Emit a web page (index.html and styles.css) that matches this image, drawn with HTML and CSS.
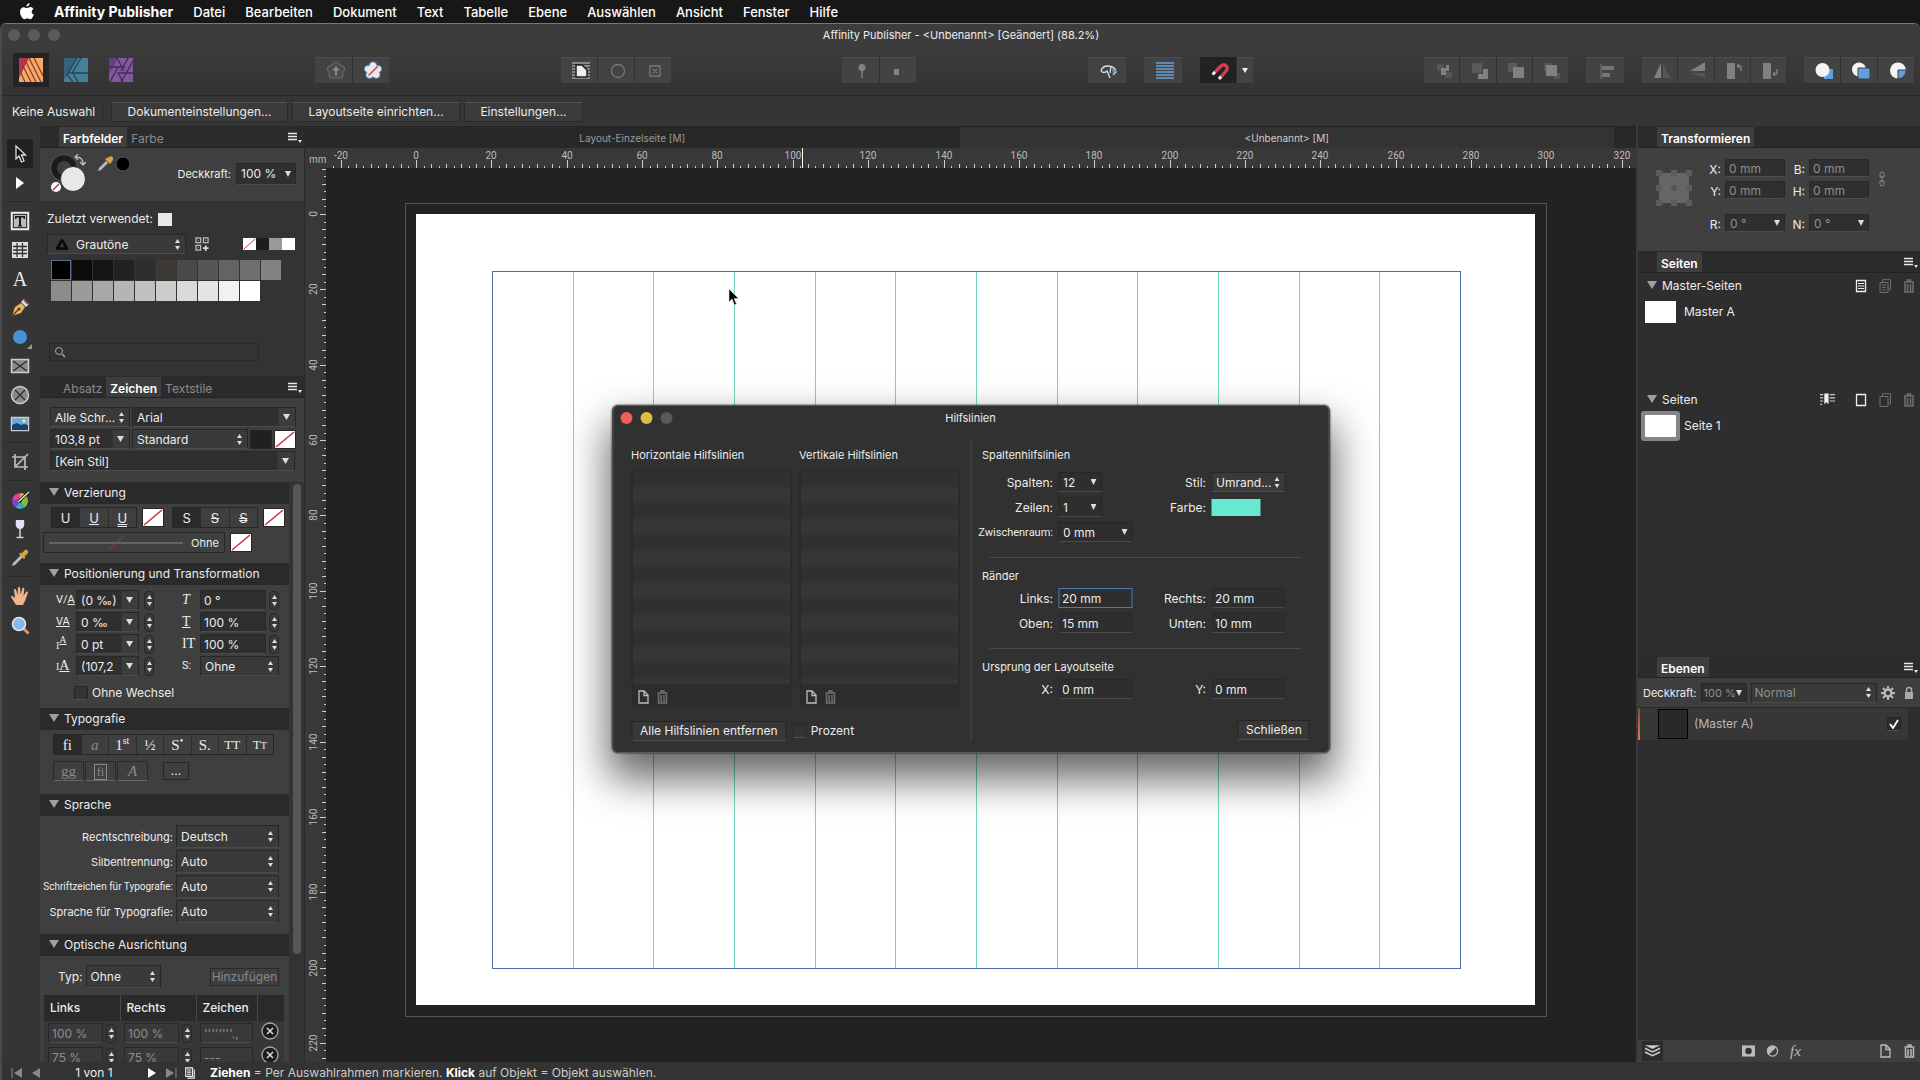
FILE: index.html
```html
<!DOCTYPE html>
<html lang="de">
<head>
  <meta charset="UTF-8">
  <meta name="viewport" content="width=device-width, initial-scale=1.0">
  <title>Affinity Publisher</title>
  <link rel="stylesheet" href="styles.css">
</head>
<body>

<!-- shared icons -->
<svg class="sprite" aria-hidden="true">
  <symbol id="i-menu" viewBox="0 0 14 12"><path d="M0 1.500h9M0 4.500h9M0 7.500h9" stroke="#e8e8e8" stroke-width="1.400"/><path d="M10 8h4l-2 3z" fill="#e8e8e8"/></symbol>
  <symbol id="i-trash" viewBox="0 0 12 14"><path d="M1 3h10M4.500 2.500v-1.500h3v1.500M2 4v9h8v-9M4.500 5v7M7.500 5v7" fill="none" stroke="currentColor" stroke-width="1.500"/></symbol>
  <symbol id="i-page" viewBox="0 0 12 14"><path d="M1.500 1h5l4 4v8h-9zM6.500 1v4.500h4" fill="none" stroke="currentColor" stroke-width="1.300"/></symbol>
  <symbol id="i-none" viewBox="0 0 20 18" preserveAspectRatio="none"><path d="M0 0h20v18H0z" fill="#fff"/><path d="M1 17L19 1" stroke="#c8323c" stroke-width="1.500"/></symbol>
  <symbol id="i-flower" viewBox="0 0 22 22"><path d="M11 1c2.500 0 4 1.800 4.200 4.200 2.600-.6 5 .6 5.200 3 .2 1.900-1 3.300-2.600 4.300 1.200 1.700 1.300 4-.2 5.500-1.800 1.700-4.500 1.200-6.600-.8-2.100 2-4.800 2.500-6.600.8-1.500-1.500-1.400-3.800-.2-5.500C2.600 11.500 1.400 10.100 1.600 8.200c.2-2.400 2.600-3.600 5.200-3C7 2.800 8.500 1 11 1z"/></symbol>
</svg>

<nav class="menubar">
  <svg class="apple" viewBox="0 0 14 17"><path d="M9.700 0c.1 1.800-1.500 3.600-3.200 3.600C6.300 1.900 8 .2 9.700 0zM13.300 5.900c-2.400 1.500-2 4.700.6 5.700-.6 2-2.100 4.600-3.600 4.600-1.100 0-1.500-.7-2.900-.7s-1.900.7-2.900.7C2.500 16.200 0 12 0 8.700 0 5.800 1.900 4.200 3.800 4.200c1.300 0 2.200.8 3.200.8s2-.9 3.700-.9c1.100.1 2 .7 2.600 1.800z" fill="#fff"/></svg>
  <a href="#" class="app">Affinity Publisher</a>
  <a href="#">Datei</a>
  <a href="#">Bearbeiten</a>
  <a href="#">Dokument</a>
  <a href="#">Text</a>
  <a href="#">Tabelle</a>
  <a href="#">Ebene</a>
  <a href="#">Auswählen</a>
  <a href="#">Ansicht</a>
  <a href="#">Fenster</a>
  <a href="#">Hilfe</a>
</nav>

<div class="window">
  <header class="titlebar">
    <span class="lights"><i></i><i></i><i></i></span>
    <h1>Affinity Publisher - &lt;Unbenannt&gt; [Geändert] (88.2%)</h1>
  </header>

  <div class="toolbar">
    <div class="personas">
      <button class="on" aria-label="Publisher Persona"><svg viewBox="0 0 24 24"><path d="M0 0h24v24H0z" fill="#f5a868"/><path d="M0 0h10L0 20z" fill="#b5354c"/><path d="M4 8l8 16M7 4l10 20M10 0l12 24M15 0l9 18M1 13l5 11" stroke="#8c3f30" stroke-width="1.300" fill="none"/></svg></button>
      <button aria-label="Designer Persona"><svg viewBox="0 0 24 24"><path d="M0 0h24v24H0z" fill="#477f99"/><path d="M0 0h13L0 22z" fill="#38607f"/><path d="M13 0L3 17l6 7M17 0L8 15h16M9 15l5 9M4 15h5" stroke="#20465c" stroke-width="1.300" fill="none"/></svg></button>
      <button aria-label="Photo Persona"><svg viewBox="0 0 24 24"><path d="M0 0h24v24H0z" fill="#82589a"/><path d="M0 0h9L0 16z" fill="#60437f"/><path d="M8 0l7 13M24 3L12 24M0 9h16M9 9L1 24M24 15H9l5 9M19 0l-7 13" stroke="#452a5a" stroke-width="1.300" fill="none"/></svg></button>
    </div>
    <span class="space"></span>
    <div class="group">
      <button aria-label="Standards übernehmen"><svg viewBox="0 0 22 22"><use href="#i-flower" fill="#4b4b4b" stroke="#777"/><path d="M11 16V8M8 10.500L11 7l3 3.500" stroke="#8a8a8a" stroke-width="2" fill="none"/></svg></button>
      <button aria-label="Standards zurücksetzen"><svg viewBox="0 0 22 22"><use href="#i-flower" fill="#e6e9ee" stroke="#5a96d8"/><path d="M6 16L16 6" stroke="#d8494c" stroke-width="1.800"/></svg></button>
    </div>
    <span class="space"></span>
    <div class="group g3">
      <button aria-label="Umfließen"><svg viewBox="0 0 20 20"><path d="M1 2h18M1 5h18M1 8h18M1 11h18M1 14h18M1 17h18" stroke="#ccc"/><path d="M5 4h6l5 5v7H5z" fill="#eee" stroke="#222" stroke-width="1.500"/></svg></button>
      <button aria-label="Ellipse"><svg viewBox="0 0 20 20"><circle cx="10" cy="10" r="6.500" fill="none" stroke="#7a7a7a" stroke-width="1.300"/></svg></button>
      <button aria-label="Rahmen"><svg viewBox="0 0 20 20"><path d="M5 5h10v10H5zM8 8l4 4M12 8l-4 4" fill="none" stroke="#7a7a7a" stroke-width="1.300"/></svg></button>
    </div>
    <span class="space"></span>
    <div class="group">
      <button aria-label="Anheften"><svg viewBox="0 0 20 20"><circle cx="10" cy="6.500" r="3.500" fill="#828282"/><path d="M10 9v8" stroke="#828282" stroke-width="1.500"/></svg></button>
      <button aria-label="Inline"><svg viewBox="0 0 20 20"><path d="M4 8h5v6H4z" fill="#828282"/></svg></button>
    </div>
    <span class="space"></span>
    <div class="group single"><button aria-label="Vorschau"><svg viewBox="0 0 20 20"><path d="M2 10c1-4 4-5 7-5 5 0 8 3 8 6l-3 3M2 10c2 2 4 2 6 0l3 7M12 5l-1 7" fill="none" stroke="#ddd" stroke-width="1.300"/><path d="M13 6l4 4-3 4z" fill="#5f93c4"/></svg></button></div>
    <div class="group single"><button aria-label="Grundlinienraster"><svg viewBox="0 0 20 20"><path d="M1 2h18M1 5h18M1 8h18M1 11h18M1 14h18M1 17h18" stroke="#6aa0d8" stroke-width="1.400"/></svg></button></div>
    <div class="group magnet">
      <button class="on" aria-label="Einrasten"><svg viewBox="0 0 20 20"><path d="M4 12l7-7c4-3 8 1 5 5l-6 7" fill="none" stroke="#cf3f56" stroke-width="3.400"/><path d="M2.500 13.500L5 11M9 18l2-2.500" stroke="#eee" stroke-width="3"/></svg></button>
      <button class="caret" aria-label="Einrastoptionen"><svg viewBox="0 0 10 10"><path d="M2 2h6l-3 5z" fill="#eee"/></svg></button>
    </div>
    <span class="space"></span>
    <div class="group g4">
      <button aria-label="Ganz nach hinten"><svg viewBox="0 0 20 20"><path d="M3 3h7v7H3zM11 11h7v6h-7z" fill="#555"/><path d="M7 7h5V4h3v6h-3v4H7z" fill="#808080"/></svg></button>
      <button aria-label="Nach hinten"><svg viewBox="0 0 20 20"><path d="M2 2h10v10H2z" fill="#5a5a5a"/><path d="M13 8h5v10H8v-5h5z" fill="#808080"/></svg></button>
      <button aria-label="Nach vorne"><svg viewBox="0 0 20 20"><path d="M2 2h9v9H2z" fill="#5a5a5a"/><path d="M7 6h11v11H7z" fill="#808080"/></svg></button>
      <button aria-label="Ganz nach vorne"><svg viewBox="0 0 20 20"><path d="M2 2h8v8H2zM12 12h6v6h-6z" fill="#565656"/><path d="M4 4h11v11H4z" fill="#808080"/></svg></button>
    </div>
    <div class="group single"><button aria-label="Ausrichtung"><svg viewBox="0 0 20 20"><path d="M4 3v15" stroke="#777"/><path d="M5 5h12v4H5zM5 12h8v4H5z" fill="#777"/></svg></button></div>
    <div class="group g4">
      <button aria-label="Horizontal spiegeln"><svg viewBox="0 0 20 20"><path d="M9 2v15H2z" fill="#808080"/><path d="M11 2v15h7z" fill="#555"/></svg></button>
      <button aria-label="Vertikal spiegeln"><svg viewBox="0 0 20 20"><path d="M17 1v9H2z" fill="#808080"/><path d="M2 12h15v5z" fill="#555"/></svg></button>
      <button aria-label="Links drehen"><svg viewBox="0 0 20 20"><path d="M3 2h8v16H3z" fill="#808080"/><path d="M17 10V5h-4M15 3l-2 2 2 2" stroke="#999" fill="none"/></svg></button>
      <button aria-label="Rechts drehen"><svg viewBox="0 0 20 20"><path d="M3 2h8v16H3z" fill="#808080"/><path d="M17 8v5h-4M15 11l-2 2 2 2" stroke="#999" fill="none"/></svg></button>
    </div>
    <div class="group g3">
      <button aria-label="Dahinter einfügen"><svg viewBox="0 0 20 20"><path d="M10 8h9v10h-9z" fill="#5f9fdf"/><circle cx="8.500" cy="9" r="7" fill="#f4f4f4"/></svg></button>
      <button aria-label="Oben einfügen"><svg viewBox="0 0 20 20"><circle cx="8" cy="8.500" r="7" fill="#f4f4f4"/><path d="M7 7h12v11H7z" fill="#5f9fdf" stroke="#3c3c3c"/></svg></button>
      <button aria-label="Innen einfügen"><svg viewBox="0 0 20 20"><circle cx="10" cy="9.500" r="8" fill="#f4f4f4"/><path d="M10 9h8c0 5-3 8.500-8 8.500z" fill="#5f9fdf" stroke="#3c3c3c"/></svg></button>
    </div>
  </div>

  <div class="context">
    <span class="selection">Keine Auswahl</span>
    <button class="w1">Dokumenteinstellungen...</button>
    <button class="w2">Layoutseite einrichten...</button>
    <button class="w3">Einstellungen...</button>
  </div>

  <main>
    <div class="tools">
      <button class="on" aria-label="Verschieben"><svg viewBox="0 0 24 24"><path d="M8 4v13l3-3 2.500 6 2.500-1-2.500-6h4z" fill="#111" stroke="#ddd" stroke-width="1.300"/></svg></button>
      <button aria-label="Knoten"><svg viewBox="0 0 24 24"><path d="M8 6l8 6-8 6z" fill="#fff"/></svg></button>
      <hr>
      <button aria-label="Rahmentext"><svg viewBox="0 0 24 24"><path d="M3.500 3.500h17v17h-17z" fill="#bbb" stroke="#e8e8e8" stroke-width="1.500"/><path d="M5.500 5.500h13v13h-13z" fill="none" stroke="#333"/><path d="M7 7h10v3h-1l-1-1.500h-2V16l1 .5v1h-4v-1l1-.5V8.500H9L8 10H7z" fill="#1c1c1c"/></svg></button>
      <button aria-label="Tabelle"><svg viewBox="0 0 24 24"><path d="M4 4h16v16H4z" fill="#ddd"/><path d="M5 8.500h14M5 12h14M5 15.500h14M9 5v14M14.500 5v14" stroke="#333" stroke-width="1.300"/></svg></button>
      <button aria-label="Grafiktext"><span class="letter">A</span></button>
      <button aria-label="Zeichenstift"><svg viewBox="0 0 24 24"><path d="M4 20l3-9 6-4 4 4-4 6z" fill="#e8b65c"/><path d="M4 20l6-6" stroke="#5b3a12" stroke-width="1.400"/><circle cx="11" cy="13" r="1.500" fill="#5b3a12"/><path d="M13 6l5 5 3-3-5-5z" fill="#ddd"/><path d="M16 4l4 4" stroke="#8c3030" stroke-width="1.500"/></svg></button>
      <button aria-label="Ellipse"><svg viewBox="0 0 24 24"><circle cx="12" cy="12" r="7" fill="#4690d4"/><path d="M24 19v5h-5z" fill="#999"/></svg></button>
      <button aria-label="Bildrahmen Rechteck"><svg viewBox="0 0 24 24"><path d="M3.500 5.500h17v13h-17z" fill="#8a8a8a" stroke="#ccc" stroke-width="1.500"/><path d="M5 7l14 10M19 7L5 17" stroke="#2a2a2a" stroke-width="1.200"/></svg></button>
      <button aria-label="Bildrahmen Ellipse"><svg viewBox="0 0 24 24"><circle cx="12" cy="12" r="8.500" fill="#8a8a8a" stroke="#ccc" stroke-width="1.500"/><path d="M7 7l10 10M17 7L7 17" stroke="#2a2a2a" stroke-width="1.200"/></svg></button>
      <button aria-label="Bild platzieren"><svg viewBox="0 0 24 24"><path d="M3.500 5.500h17v13h-17z" fill="#67a8dc" stroke="#ccc" stroke-width="1.500"/><path d="M4 13l5-2 4 2 3-1 4 1v5H4z" fill="#1c3f6b"/><circle cx="16" cy="9" r="1.800" fill="#f6dc6a"/></svg></button>
      <hr>
      <button aria-label="Zuschneiden"><svg viewBox="0 0 24 24"><path d="M7 4v13h13M4 7h13v13M8 16l12-12" fill="none" stroke="#bbb" stroke-width="1.700"/></svg></button>
      <hr>
      <button aria-label="Füllung"><svg viewBox="0 0 24 24"><g fill="none" stroke-width="6"><path d="M12 8a5 5 0 0 1 4.500 3" stroke="#e0b23a"/><path d="M16.700 11a5 5 0 0 1-2 6" stroke="#79c143"/><path d="M14.700 17a5 5 0 0 1-5.500 0" stroke="#38a4d8"/><path d="M9.200 17a5 5 0 0 1-2-5" stroke="#7a46c8"/><path d="M7.200 12a5 5 0 0 1 5-4" stroke="#e0458a"/></g><path d="M10 14L21 4" stroke="#111" stroke-width="3"/><path d="M10 14L21 4" stroke="#eee" stroke-width="1.400"/></svg></button>
      <button aria-label="Transparenz"><svg viewBox="0 0 24 24"><path d="M8 3h8c1 6-.5 9-4 9s-5-3-4-9z" fill="#dfe5f2"/><path d="M12 12v8M8.500 20.500h7" stroke="#c8cede" stroke-width="1.600"/></svg></button>
      <button aria-label="Farbpipette"><svg viewBox="0 0 24 24"><path d="M4 20l1-3 8-8 2 2-8 8z" fill="#bbb"/><path d="M11 8l5 5 1.500-1.500-1-1L20 7c1-2-1-4-3-3l-3.500 3.500-1-1z" fill="#d9a441"/></svg></button>
      <hr>
      <button aria-label="Ansicht"><svg viewBox="0 0 24 24"><path d="M8 21l-5-8c0-1 1.500-1.500 2.500 0L7 14 6 6c0-1.500 2-1.500 2.200 0L9.500 11 10 4c.1-1.400 2-1.400 2.200 0l.3 7 1.800-6.500c.4-1.300 2.200-1 2 .4L15.500 12l2.500-4c.8-1 2.300-.2 1.800 1L17 17l-2 4z" fill="#efb48c"/></svg></button>
      <button aria-label="Zoom"><svg viewBox="0 0 24 24"><path d="M15 15l5.500 5.500" stroke="#d99a63" stroke-width="3"/><circle cx="11" cy="11" r="6.500" fill="#86b9e8" stroke="#dfe8f0" stroke-width="1.500"/></svg></button>
    </div>

    <aside class="panels left">
      <div class="tabs">
        <button class="tab on">Farbfelder</button><button class="tab">Farbe</button>
        <button class="flyout" aria-label="Optionen"><svg><use href="#i-menu"/></svg></button>
      </div>
      <div class="color-head">
        <svg class="wells" viewBox="0 0 86 40"><circle cx="15" cy="14" r="10" fill="none" stroke="#1c1c1c" stroke-width="6"/><circle cx="15" cy="14" r="13.500" fill="none" stroke="#555"/><path d="M27 3c5 0 7 3 7 7M29 0l-3 3 3 3M31 8l3 3 3-3" fill="none" stroke="#bbb" stroke-width="1.300"/><circle cx="24" cy="25" r="12.500" fill="#e6e8ea" stroke="#333"/><circle cx="7" cy="33" r="5" fill="#fff"/><path d="M4 36l6-6" stroke="#c8323c" stroke-width="1.500"/><path d="M49 17l1-3 7-7 2 2-7 7z" fill="#bbb"/><path d="M56 5l5 5 3-4c1-2-2-5-4-3z" fill="#d9a441"/><circle cx="74" cy="10" r="7" fill="#000" stroke="#555"/></svg>
        <label for="deck">Deckkraft:</label>
        <select id="deck" class="combo"><option>100 %</option></select>
      </div>
      <div class="swatch-panel">
        <div class="recent">Zuletzt verwendet: <button class="chip" aria-label="Weiß"></button></div>
        <div class="palette-row">
          <svg class="palette-mark" viewBox="0 0 14 12"><path d="M7 2l5 8.500H2z" fill="none" stroke="#0a0a0a" stroke-width="2.500" stroke-linejoin="round"/></svg>
          <select class="updown" aria-label="Palette"><option>Grautöne</option></select>
          <button class="bare" aria-label="Farbe hinzufügen"><svg viewBox="0 0 15 15"><path d="M1 1h5v5H1zM9 1h5v5H9zM1 9h5v5H1zM3 3.500h1M11 3.500h1M3 11.500h1" fill="none" stroke="#bbb" stroke-width="1.300"/><path d="M11.500 9v6M8.500 12h6" stroke="#ddd" stroke-width="1.800"/></svg></button>
          <span class="mini"><svg><use href="#i-none"/></svg><i class="k"></i><i class="g"></i><i class="w"></i></span>
        </div>
        <div class="swatches" id="swatches"></div>
        <div class="search"><svg viewBox="0 0 12 12"><circle cx="5" cy="5" r="3.500" fill="none" stroke="#aaa"/><path d="M8 8l3 3" stroke="#aaa" stroke-width="1.500"/></svg><input type="text" aria-label="Suchen"></div>
      </div>

      <div class="tabs">
        <button class="tab">Absatz</button><button class="tab on">Zeichen</button><button class="tab">Textstile</button>
        <button class="flyout" aria-label="Optionen"><svg><use href="#i-menu"/></svg></button>
      </div>
      <div class="font-box">
        <div class="line">
          <select class="updown f1" aria-label="Schriftsammlung"><option>Alle Schr...</option></select>
          <select class="drop f2" aria-label="Schrift"><option>Arial</option></select>
        </div>
        <div class="line">
          <select class="drop f1" aria-label="Schriftgrad"><option>103,8 pt</option></select>
          <select class="updown f3" aria-label="Schnitt"><option>Standard</option></select>
          <button class="sw dark" aria-label="Textfarbe"></button>
          <button class="sw" aria-label="Hintergrund"><svg><use href="#i-none"/></svg></button>
        </div>
        <div class="line"><select class="drop f4" aria-label="Zeichenstil"><option>[Kein Stil]</option></select></div>
      </div>

      <div class="scroller">
        <div class="sections">
          <h3>Verzierung</h3>
          <div class="body deco">
            <div class="line">
              <div class="seg"><button class="on">U</button><button><u>U</u></button><button><u class="dbl">U</u></button></div>
              <button class="sw" aria-label="Unterstreichungsfarbe"><svg><use href="#i-none"/></svg></button>
              <div class="seg second"><button class="on">S</button><button><s>S</s></button><button><s class="dbl">S</s></button></div>
              <button class="sw" aria-label="Durchstreichungsfarbe"><svg><use href="#i-none"/></svg></button>
            </div>
            <div class="line">
              <button class="stroke"><svg viewBox="0 0 136 16"><path d="M0 8h136" stroke="#8a8a8a"/><path d="M61 15L76 1" stroke="#a33"/></svg>Ohne</button>
              <button class="sw" aria-label="Konturfarbe"><svg><use href="#i-none"/></svg></button>
            </div>
          </div>

          <h3>Positionierung und Transformation</h3>
          <div class="body pos">
            <div class="pairs">
              <div class="pair a">
                <label for="kern" class="sans">V/<u>A</u></label><select id="kern" class="drop"><option>(0 ‰)</option></select><button class="step" aria-label="Kerning ändern"></button>
                <label for="track" class="sans"><u>VA</u></label><select id="track" class="drop"><option>0 ‰</option></select><button class="step" aria-label="Laufweite ändern"></button>
                <label for="base"><small>I</small><sup><u>A</u></sup></label><select id="base" class="drop"><option>0 pt</option></select><button class="step" aria-label="Grundlinie ändern"></button>
                <label for="lead"><small>I</small><u>A</u></label><select id="lead" class="drop"><option>(107,2</option></select><button class="step" aria-label="Zeilenabstand ändern"></button>
              </div>
              <div class="pair b">
                <label for="shear"><i>T</i></label><input id="shear" type="text" value="0 °"><button class="step" aria-label="Neigung ändern"></button>
                <label for="hs"><u>T</u></label><input id="hs" type="text" value="100 %"><button class="step" aria-label="Breite ändern"></button>
                <label for="vs">IT</label><input id="vs" type="text" value="100 %"><button class="step" aria-label="Höhe ändern"></button>
                <label for="pv" class="sans">S:</label><select id="pv" class="updown wide"><option>Ohne</option></select>
              </div>
            </div>
            <label class="check"><input type="checkbox">Ohne Wechsel</label>
          </div>

          <h3>Typografie</h3>
          <div class="body typo">
            <div class="seg eight"><button class="on">fi</button><button class="dim"><i>a</i></button><button>1<sup>st</sup></button><button>½</button><button>S<sup>•</sup></button><button>S.</button><button class="caps">TT</button><button class="caps">T<small>T</small></button></div>
            <div class="line">
              <button class="box">gg</button><button class="box"><span>fi</span></button><button class="box"><i>A</i></button><button class="more">...</button>
            </div>
          </div>

          <h3>Sprache</h3>
          <div class="body lang">
            <label for="l1">Rechtschreibung:</label><select id="l1" class="updown"><option>Deutsch</option></select>
            <label for="l2">Silbentrennung:</label><select id="l2" class="updown"><option>Auto</option></select>
            <label for="l3" class="tight">Schriftzeichen für Typografie:</label><select id="l3" class="updown"><option>Auto</option></select>
            <label for="l4">Sprache für Typografie:</label><select id="l4" class="updown"><option>Auto</option></select>
          </div>

          <h3>Optische Ausrichtung</h3>
          <div class="body optical">
            <div class="line">
              <label for="typ">Typ:</label><select id="typ" class="updown"><option>Ohne</option></select>
              <button class="add" disabled>Hinzufügen</button>
            </div>
            <table>
              <thead><tr><th>Links</th><th>Rechts</th><th>Zeichen</th><th></th></tr></thead>
              <tbody>
                <tr>
                  <td><span><input type="text" value="100 %" aria-label="Links" disabled><button class="step" aria-label="Links ändern"></button></span></td>
                  <td><span><input type="text" value="100 %" aria-label="Rechts" disabled><button class="step" aria-label="Rechts ändern"></button></span></td>
                  <td><input type="text" value="''''''''.," aria-label="Zeichen" disabled></td>
                  <td><button class="del" aria-label="Löschen"><svg viewBox="0 0 18 18"><circle cx="9" cy="9" r="8" fill="#1c1c1c" stroke="#aaa" stroke-width="1.300"/><path d="M6 6l6 6M12 6l-6 6" stroke="#ddd" stroke-width="1.500"/></svg></button></td>
                </tr>
                <tr>
                  <td><span><input type="text" value="75 %" aria-label="Links" disabled><button class="step" aria-label="Links ändern"></button></span></td>
                  <td><span><input type="text" value="75 %" aria-label="Rechts" disabled><button class="step" aria-label="Rechts ändern"></button></span></td>
                  <td><input type="text" value="---" aria-label="Zeichen" disabled></td>
                  <td><button class="del" aria-label="Löschen"><svg viewBox="0 0 18 18"><circle cx="9" cy="9" r="8" fill="#1c1c1c" stroke="#aaa" stroke-width="1.300"/><path d="M6 6l6 6M12 6l-6 6" stroke="#ddd" stroke-width="1.500"/></svg></button></td>
                </tr>
              </tbody>
            </table>
          </div>
        </div>
        <div class="bar"></div>
      </div>
    </aside>

    <section class="document">
      <div class="doc-tabs">
        <button>Layout-Einzelseite [M]</button>
        <button class="on">&lt;Unbenannt&gt; [M]</button>
      </div>
      <span class="unit">mm</span>
      <svg class="ruler-h" id="rulerH"></svg>
      <svg class="ruler-v" id="rulerV"></svg>
      <div class="canvas">
        <svg class="sheet" id="sheet"></svg>
        <svg class="cursor" viewBox="0 0 12 18"><path d="M1 1v13l3-3 2.500 6 2-1-2.500-5.500h4.500z" fill="#000" stroke="#ddd" stroke-width=".6"/></svg>
      </div>

      <div class="dialog" role="dialog" aria-labelledby="dlgTitle">
        <header>
          <span class="lights"><i class="red"></i><i class="yellow"></i><i></i></span>
          <h2 id="dlgTitle">Hilfslinien</h2>
        </header>
        <div class="dlg-body">
          <div class="guides">
            <div class="lists">
              <div>
                <h4>Horizontale Hilfslinien</h4>
                <div class="list"></div>
                <div class="list-bar"><button aria-label="Neu"><svg><use href="#i-page"/></svg></button><button class="dim" aria-label="Löschen"><svg><use href="#i-trash"/></svg></button></div>
              </div>
              <div>
                <h4>Vertikale Hilfslinien</h4>
                <div class="list"></div>
                <div class="list-bar"><button aria-label="Neu"><svg><use href="#i-page"/></svg></button><button class="dim" aria-label="Löschen"><svg><use href="#i-trash"/></svg></button></div>
              </div>
            </div>
            <div class="guide-actions">
              <button class="btn">Alle Hilfslinien entfernen</button>
              <label class="check"><input type="checkbox">Prozent</label>
            </div>
          </div>
          <form>
            <h4>Spaltenhilfslinien</h4>
            <div class="grid">
              <label for="cols">Spalten:</label><select id="cols" class="combo short"><option>12</option></select>
              <label for="style">Stil:</label><select id="style" class="updown"><option>Umrand...</option></select>
              <label for="rows">Zeilen:</label><select id="rows" class="combo short"><option>1</option></select>
              <label for="col">Farbe:</label><button type="button" id="col" class="farbe"></button>
              <label for="gut" class="tight">Zwischenraum:</label><select id="gut" class="combo"><option>0 mm</option></select>
            </div>
            <hr>
            <h4>Ränder</h4>
            <div class="grid">
              <label for="ml">Links:</label><input id="ml" type="text" value="20 mm" class="focus">
              <label for="mr">Rechts:</label><input id="mr" type="text" value="20 mm">
              <label for="mt">Oben:</label><input id="mt" type="text" value="15 mm">
              <label for="mb">Unten:</label><input id="mb" type="text" value="10 mm">
            </div>
            <hr>
            <h4>Ursprung der Layoutseite</h4>
            <div class="grid">
              <label for="ox">X:</label><input id="ox" type="text" value="0 mm">
              <label for="oy">Y:</label><input id="oy" type="text" value="0 mm">
            </div>
            <button type="button" class="btn close">Schließen</button>
          </form>
        </div>
      </div>
    </section>

    <aside class="panels right">
      <div class="tabs"><button class="tab on">Transformieren</button></div>
      <div class="transform">
        <svg class="anchor" viewBox="0 0 38 38"><path d="M4 4h30v30H4z" fill="#666"/><path d="M1 1h6v6H1zM16 1h6v6h-6zM31 1h6v6h-6zM1 16h6v6H1zM31 16h6v6h-6zM1 31h6v6H1zM16 31h6v6h-6zM31 31h6v6h-6z" fill="#5c5c5c"/><circle cx="19" cy="19" r="3" fill="#555"/></svg>
        <div class="xy">
          <label for="tx">X:</label><input id="tx" type="text" value="0 mm" disabled>
          <label for="tb">B:</label><input id="tb" type="text" value="0 mm" disabled>
          <label for="ty">Y:</label><input id="ty" type="text" value="0 mm" disabled>
          <label for="th">H:</label><input id="th" type="text" value="0 mm" disabled>
          <label for="tr" class="gap">R:</label><select id="tr" class="combo gap" disabled><option>0 °</option></select>
          <label for="tn" class="gap">N:</label><select id="tn" class="combo gap" disabled><option>0 °</option></select>
        </div>
        <svg class="link" viewBox="0 0 6 16"><path d="M1 6V3a2 2 0 0 1 4 0v3zM1 10v3a2 2 0 0 0 4 0v-3zM3 5v6" fill="none" stroke="#888"/></svg>
      </div>

      <div class="tabs"><button class="tab on">Seiten</button><button class="flyout" aria-label="Optionen"><svg><use href="#i-menu"/></svg></button></div>
      <div class="pages">
        <div class="pages-block masters">
          <div class="pages-head">
            <h3>Master-Seiten</h3>
            <button aria-label="Neuer Master"><svg viewBox="0 0 12 14"><path d="M1.500 1.500h9v11h-9z" fill="none" stroke="#eee" stroke-width="1.300"/><path d="M3 4.500h6M3 7h6M3 9.500h6" stroke="#eee"/></svg></button>
            <button class="dim" aria-label="Duplizieren"><svg viewBox="0 0 12 14"><path d="M1 3.500h8v10H1zM3.500 3V.7h8v10H9.500M3 6h4M3 8.500h4M3 11h4" fill="none" stroke="currentColor"/></svg></button>
            <button class="dim" aria-label="Löschen"><svg><use href="#i-trash"/></svg></button>
          </div>
          <a class="page-item" href="#"><i></i>Master A</a>
        </div>
        <div class="pages-block">
          <div class="pages-head">
            <h3>Seiten</h3>
            <button class="wide" aria-label="Abschnitte"><svg viewBox="0 0 14 12"><path d="M0 1h3M0 4h3M0 7h3M0 10h2M9 1h5M9 4h5M9 7h5" stroke="#ccc"/><path d="M4 0h4v10l-2-2-2 2z" fill="#eee"/></svg></button>
            <button aria-label="Neue Seite"><svg viewBox="0 0 12 14"><path d="M1.500 1.500h9v11h-9z" fill="none" stroke="#eee" stroke-width="1.300"/></svg></button>
            <button class="dim" aria-label="Duplizieren"><svg viewBox="0 0 12 14"><path d="M1 3.500h8v10H1zM3.500 3V.7h8v10H9.500" fill="none" stroke="currentColor"/></svg></button>
            <button class="dim" aria-label="Löschen"><svg><use href="#i-trash"/></svg></button>
          </div>
          <a class="page-item on" href="#"><i></i>Seite 1</a>
        </div>
      </div>

      <div class="tabs"><button class="tab on">Ebenen</button><button class="flyout" aria-label="Optionen"><svg><use href="#i-menu"/></svg></button></div>
      <div class="layer-opts">
        <label for="lo">Deckkraft:</label>
        <select id="lo" class="combo" disabled><option>100 %</option></select>
        <select class="updown" aria-label="Mischmodus" disabled><option>Normal</option></select>
        <button class="bare" aria-label="Optionen"><svg viewBox="0 0 14 14"><circle cx="7" cy="7" r="3.500" fill="none" stroke="#bbb" stroke-width="2.500"/><path d="M7 0v3M7 11v3M0 7h3M11 7h3M2 2l2 2M10 10l2 2M12 2l-2 2M4 10l-2 2" stroke="#bbb" stroke-width="2"/></svg></button>
        <button class="bare" aria-label="Sperren"><svg viewBox="0 0 14 14"><path d="M3 6h8v7H3z" fill="#aaa"/><path d="M4.500 6V4a2.500 2.500 0 0 1 5 0v2" fill="none" stroke="#aaa" stroke-width="1.500"/></svg></button>
      </div>
      <div class="layers">
        <div class="layer"><i></i><label for="vis">(Master A)</label><input id="vis" type="checkbox" checked></div>
      </div>
      <div class="layer-bar">
        <button class="stack" aria-label="Alle Ebenen"><svg viewBox="0 0 18 14"><path d="M1 1h16l-8 4z" fill="#ccc"/><path d="M1 4l8 4 8-4M1 8l8 4 8-4" fill="none" stroke="#ccc" stroke-width="1.700"/></svg></button>
        <button aria-label="Maske"><svg viewBox="0 0 14 14"><path d="M0 1h14v12H0z" fill="#bbb"/><circle cx="7" cy="7" r="3.500" fill="#333"/></svg></button>
        <button aria-label="Anpassung"><svg viewBox="0 0 14 14"><circle cx="7" cy="7" r="5.500" fill="none" stroke="#bbb" stroke-width="1.300"/><path d="M11 3A5.600 5.600 0 1 0 3 11z" fill="#bbb"/></svg></button>
        <button class="fx" aria-label="Effekte">fx</button>
        <span class="space"></span>
        <button aria-label="Neue Ebene"><svg><use href="#i-page"/></svg></button>
        <button aria-label="Löschen"><svg><use href="#i-trash"/></svg></button>
      </div>
    </aside>
  </main>

  <footer class="status">
    <button aria-label="Erste Seite"><svg viewBox="0 0 12 10"><path d="M1 0v10" stroke="#888"/><path d="M11 0v10L3 5z" fill="#888"/></svg></button>
    <button aria-label="Vorherige Seite"><svg viewBox="0 0 12 10"><path d="M10 0v10L2 5z" fill="#888"/></svg></button>
    <span class="count">1 von 1</span>
    <button aria-label="Nächste Seite"><svg viewBox="0 0 12 10"><path d="M2 0v10l8-5z" fill="#fff"/></svg></button>
    <button aria-label="Letzte Seite"><svg viewBox="0 0 12 10"><path d="M11 0v10" stroke="#888"/><path d="M1 0v10l8-5z" fill="#888"/></svg></button>
    <button aria-label="Seitenliste"><svg viewBox="0 0 12 14"><path d="M1 1h8v10H1zM2.500 3.500h5M2.500 6h5M2.500 8.500h5M11 3v10H3" fill="none" stroke="#eee" stroke-width="1.300"/></svg></button>
    <p><b>Ziehen</b> = Per Auswahlrahmen markieren. <b>Klick</b> auf Objekt = Objekt auswählen.</p>
  </footer>
</div>

<script src="document.js"></script>
</body>
</html>
```

FILE: styles.css
```css
* {
  box-sizing: border-box;
}
body {
  margin: 0;
  height: 100vh;
  display: flex;
  flex-direction: column;
  overflow: hidden;
  background: #181818;
  color: #ececec;
  font: 12px/16px Inter, "Liberation Sans", sans-serif;
}
button, input, select {
  font: inherit;
  color: inherit;
  margin: 0;
  padding: 0;
  border: 0;
  background: none;
  border-radius: 0;
}
button svg {
  display: block;
}
h1, h2, h3, h4, p {
  margin: 0;
  font-size: 12px;
  font-weight: normal;
}
i, u, s, small, sup {
  line-height: 1;
}
.sprite {
  position: absolute;
  width: 0;
  height: 0;
}
.space {
  flex: 1;
}

/* menu bar */
.menubar {
  flex: none;
  height: 23px;
  display: flex;
  align-items: center;
  gap: 20px;
  padding-left: 20px;
  background: #171717;
}
.menubar a {
  color: #fff;
  text-decoration: none;
  font-size: 13px;
  font-weight: 500;
}
.menubar .app {
  font-size: 14px;
  font-weight: 700;
}
.apple {
  width: 14px;
  height: 17px;
}

/* window */
.window {
  flex: 1;
  min-height: 0;
  display: flex;
  flex-direction: column;
  border-top: 1px solid #777;
  border-left: 2px solid #4a4a4a;
  border-radius: 6px 6px 0 0;
  background: #353535;
}
.titlebar {
  flex: none;
  height: 21px;
  display: flex;
  align-items: center;
  background: #3c3c3c;
  border-radius: 6px 6px 0 0;
}
.titlebar h1 {
  flex: 1;
  text-align: center;
  margin-right: 60px;
  font-size: 11px;
}
.lights {
  display: flex;
  gap: 8px;
  width: 60px;
  padding-left: 6px;
}
.lights i {
  width: 12px;
  height: 12px;
  border-radius: 50%;
  background: #5a5a5a;
}
.lights .red {
  background: #ee5f5a;
}
.lights .yellow {
  background: #dfbc45;
}

/* toolbar */
.toolbar {
  flex: none;
  height: 51px;
  display: flex;
  align-items: center;
  padding: 0 6px 0 11px;
  background: linear-gradient(#3c3c3c, #333);
  border-bottom: 1px solid #272727;
}
.personas {
  display: flex;
  width: 131px;
  gap: 9px;
}
.personas button {
  width: 36px;
  height: 34px;
  display: grid;
  place-items: center;
}
.personas button.on {
  background: #242424;
}
.personas svg {
  width: 24px;
  height: 24px;
}
.group {
  display: flex;
  width: 74px;
  height: 26px;
  gap: 1px;
  background: #333;
}
.group button {
  flex: 1;
  display: grid;
  place-items: center;
  padding-left: 4px;
  background: #434343;
  border-top: 1px solid #4c4c4c;
}
.group button.on {
  background: #222;
  border-color: #222;
}
.group svg {
  width: 20px;
  height: 20px;
}
.group + .group {
  margin-left: 18px;
}
.group.single {
  width: 38px;
}
.group.g3 {
  width: 110px;
}
.group.g4 {
  width: 144px;
}
.group.magnet {
  width: 53px;
}
.group .caret {
  flex: none;
  width: 16px;
  padding: 0;
}
.group .caret svg {
  width: 10px;
  height: 10px;
}

/* context bar */
.context {
  flex: none;
  height: 30px;
  display: flex;
  align-items: center;
  gap: 4px;
  padding: 2px 0 0 10px;
  background: #353535;
}
.selection {
  width: 91px;
  margin-right: 4px;
  border-right: 1px solid #2a2a2a;
  white-space: nowrap;
}
.context button {
  height: 20px;
  background: #3b3b3b;
  border: 1px solid #2b2b2b;
  border-top-color: #555;
}
.w1 {
  width: 177px;
}
.w2 {
  width: 168px;
}
.w3 {
  width: 119px;
}

main {
  flex: 1;
  min-height: 0;
  display: grid;
  grid-template-columns: 38px 265px 1fr 284px;
}

/* tools */
.tools {
  display: flex;
  flex-direction: column;
  align-items: center;
  padding: 13px 2px 0 0;
  background: #353535;
}
.tools button {
  flex: none;
  width: 26px;
  height: 29px;
  display: grid;
  place-items: center;
}
.tools .on {
  background: #222;
}
.tools svg {
  width: 24px;
  height: 24px;
}
.tools hr {
  width: 26px;
  height: 1px;
  margin: 4px 0;
  border: 0;
  background: #272727;
}
.letter {
  font: 20px/24px "Liberation Serif", serif;
}

/* panels */
.panels {
  display: flex;
  flex-direction: column;
  min-height: 0;
  background: #333;
}
.left {
  border-right: 1px solid #2a2a2a;
}
.tabs {
  flex: none;
  height: 22px;
  display: flex;
  align-items: flex-end;
  padding-left: 19px;
  background: #2b2b2b;
  border-bottom: 1px solid #222;
}
.tab {
  height: 20px;
  padding: 3px 4px 0;
  color: #8c8c8c;
}
.tab.on {
  background: #3e3e3e;
  color: #fff;
  font-weight: 600;
}
.flyout {
  margin: 0 2px 3px auto;
}
.flyout svg {
  width: 14px;
  height: 12px;
}
select {
  appearance: none;
  height: 20px;
  padding: 1px 4px 0;
  border: 1px solid #272727;
  background: #3a3a3a no-repeat right 5px center;
}
select:disabled, input:disabled {
  opacity: 1;
  color: #8e8e8e;
}
.updown {
  border-bottom-color: #4c4c4c;
  background-image: url("data:image/svg+xml,%3Csvg xmlns='http://www.w3.org/2000/svg' width='5' height='11'%3E%3Cpath d='M0 4h5L2.500 0zM0 7h5L2.500 11z' fill='%23ddd'/%3E%3C/svg%3E");
}
.drop, .combo {
  border-bottom-color: #4c4c4c;
  background-color: #2f2f2f;
  background-image: url("data:image/svg+xml,%3Csvg xmlns='http://www.w3.org/2000/svg' width='6' height='6'%3E%3Cpath d='M0 0h6L3 6z' fill='%23ddd'/%3E%3C/svg%3E");
}
.combo {
  background-position: right 4px center;
}
.drop {
  background-image: url("data:image/svg+xml,%3Csvg xmlns='http://www.w3.org/2000/svg' width='17' height='18'%3E%3Cpath d='M0 0h17v18H0z' fill='%233c3c3c'/%3E%3Cpath d='M0 0v18' stroke='%23272727'/%3E%3Cpath d='M5 6h7l-3.500 6z' fill='%23ddd'/%3E%3C/svg%3E");
  background-position: right 0 center;
}
input[type="text"] {
  height: 20px;
  width: 100%;
  min-width: 0;
  padding: 1px 3px 0;
  background: #2f2f2f;
  border: 1px solid #272727;
  border-bottom-color: #4c4c4c;
  border-radius: 2px;
}
input[type="checkbox"] {
  appearance: none;
  width: 14px;
  height: 14px;
  background: #343434;
  border: 1px solid #262626;
  border-bottom-color: #505050;
  border-radius: 2px;
}
.check {
  display: flex;
  align-items: center;
  gap: 4px;
}
.step {
  width: 10px;
  height: 19px;
  border: 1px solid #272727;
  border-radius: 4px;
  background: #3a3a3a url("data:image/svg+xml,%3Csvg xmlns='http://www.w3.org/2000/svg' width='5' height='11'%3E%3Cpath d='M0 4h5L2.500 0zM0 7h5L2.500 11z' fill='%23ddd'/%3E%3C/svg%3E") no-repeat center;
}
.line {
  display: flex;
  align-items: center;
}
.bare svg {
  width: 14px;
  height: 14px;
}
.sw {
  flex: none;
  width: 22px;
  height: 19px;
  border: 1px solid #262626;
}
.sw svg {
  width: 20px;
  height: 17px;
}
.sw.dark {
  background: #202020;
}

/* swatches */
.color-head {
  flex: none;
  height: 53px;
  display: flex;
  align-items: center;
  padding: 0 8px 2px 9px;
  background: #3f3f3f;
}
.wells {
  width: 86px;
  height: 40px;
  margin: 0 auto 0 0;
}
.color-head select {
  width: 60px;
  height: 22px;
  margin-left: 5px;
}
.color-head label {
  font-size: 11px;
}
.swatch-panel {
  flex: none;
  height: 175px;
  padding: 8px 9px 0 7px;
}
.recent {
  height: 20px;
  display: flex;
  align-items: center;
  gap: 5px;
}
.chip {
  width: 14px;
  height: 13px;
  background: #e8e8ea;
}
.palette-row {
  display: flex;
  align-items: center;
  height: 20px;
  margin-top: 5px;
}
.palette-row select {
  width: 139px;
  padding-left: 28px;
}
.palette-row .bare {
  margin-left: 9px;
}
.palette-mark {
  width: 14px;
  height: 12px;
  margin: 0 -22px 0 8px;
  z-index: 1;
}
.mini {
  display: flex;
  margin-left: auto;
}
.mini i, .mini svg {
  width: 13px;
  height: 12px;
}
.mini .k {
  background: #1d1d1d;
}
.mini .g {
  background: #9a9a9a;
}
.mini .w {
  background: #fff;
}
.swatches {
  display: grid;
  grid-template-columns: repeat(11, 20px);
  gap: 1px;
  margin: 6px 0 0 4px;
}
.swatches button {
  height: 20px;
}
.swatches button:first-child {
  outline: 1px solid #5a6f9c;
  outline-offset: -1px;
}
.search {
  display: flex;
  align-items: center;
  width: 210px;
  height: 18px;
  margin: 42px 0 0 2px;
  padding-left: 4px;
  border: 1px solid #292929;
}
.search svg {
  flex: none;
  width: 12px;
  height: 12px;
}
.search input[type="text"] {
  height: 16px;
  border: 0;
  background: none;
}

/* character panel */
.font-box {
  flex: none;
  height: 84px;
  display: flex;
  flex-direction: column;
  gap: 2px;
  padding: 9px 8px 0 10px;
  background: #3e3e3e;
}
.font-box .line {
  gap: 2px;
}
.f1 {
  width: 80px;
}
.f2 {
  flex: 1;
}
.f3 {
  width: 116px;
}
.f4 {
  width: 245px;
}
.scroller {
  flex: 1;
  min-height: 0;
  display: flex;
  overflow: hidden;
}
.sections {
  width: 249px;
}
.bar {
  width: 8px;
  height: 470px;
  margin: 2px 0 0 4px;
  border-radius: 4px;
  background: #565656;
}
.sections h3, .pages h3 {
  height: 22px;
  line-height: 22px;
  background: #2a2a2a;
}
.sections h3::before, .pages h3::before {
  content: "";
  display: inline-block;
  margin: 0 5px 1px 9px;
  border: 5px solid transparent;
  border-top: 8px solid #a0a0a0;
  border-bottom: 0;
}
.body {
  background: #3f3f3f;
}
.deco {
  height: 59px;
  padding: 3px 3px 0;
}
.deco .line:first-child {
  padding-left: 8px;
  margin-bottom: 4px;
}
.deco .line > .sw {
  margin-left: 5px;
}
.seg {
  display: flex;
  width: 86px;
  height: 21px;
  border: 1px solid #272727;
  font-size: 13px;
}
.seg.second {
  margin-left: 8px;
}
.seg button {
  flex: 1;
}
.seg button + button {
  border-left: 1px solid #2c2c2c;
}
.seg .on {
  background: #2a2a2a;
}
.dbl {
  text-decoration-style: double;
}
.stroke {
  display: flex;
  align-items: center;
  gap: 8px;
  width: 182px;
  height: 21px;
  padding-left: 5px;
  border: 1px solid #272727;
  font-size: 11px;
}
.stroke svg {
  width: 134px;
  height: 16px;
}
.pos {
  height: 123px;
  padding: 5px 10px 0 16px;
}
.pairs {
  display: flex;
  gap: 28px;
}
.pair {
  display: grid;
  grid-template-columns: 20px 63px 15px;
  row-gap: 2px;
  align-items: center;
}
.pair.b {
  grid-template-columns: 18px 66px 13px;
}
.pair label {
  font-family: "Liberation Serif", serif;
  font-size: 14px;
  white-space: nowrap;
}
.pair .sans {
  font-family: Roboto, sans-serif;
  font-size: 11px;
}
.pair .step {
  justify-self: end;
}
.pair small, .pair sup {
  font-size: 10px;
}
.pair .wide {
  grid-column: span 2;
}
.pos .check {
  margin: 9px 0 0 18px;
}
.typo {
  height: 64px;
  padding: 4px 0 0 13px;
  font-family: "Liberation Serif", serif;
}
.seg.eight {
  width: 221px;
  font-size: 15px;
}
.typo sup, .typo small {
  font-size: 10px;
}
.typo .dim, .box {
  color: #8a8a8a;
}
.seg .caps {
  font-size: 13px;
}
.typo .line {
  margin-top: 6px;
  gap: 1px;
}
.box {
  width: 31px;
  height: 20px;
  border: 1px solid #2a2a2a;
  border-bottom-color: #666;
  border-radius: 2px;
  font-size: 15px;
}
.box span {
  border: 1px solid #8a8a8a;
  padding: 0 2px;
  font-size: 12px;
}
.more {
  width: 26px;
  height: 18px;
  margin-left: 14px;
  border: 1px solid #272727;
  font: 12px/12px Inter, sans-serif;
}
.lang {
  height: 118px;
  display: grid;
  grid-template-columns: 133px 103px;
  grid-auto-rows: 23px;
  gap: 2px 3px;
  align-items: center;
  padding-top: 9px;
}
.lang label {
  text-align: right;
  white-space: nowrap;
  justify-self: end;
  font-size: 11px;
}
.lang select {
  height: 23px;
}
.lang .tight {
  font-family: Roboto, sans-serif;
  font-size: 10px;
}
.optical {
  padding: 9px 5px 0 4px;
}
.optical .line {
  padding: 0 5px 0 14px;
}
.optical .line select {
  width: 75px;
  height: 23px;
  margin-left: 3px;
}
.add {
  width: 69px;
  height: 18px;
  margin-left: auto;
  border: 1px solid #2b2b2b;
  color: #8a8a8a;
}
table {
  width: 240px;
  margin-top: 7px;
  border-collapse: collapse;
  table-layout: fixed;
}
thead {
  background: #2a2a2a;
}
th {
  height: 26px;
  width: 76px;
  padding: 2px 6px;
  text-align: left;
  font-weight: 500;
  border-right: 1px solid #484848;
}
th:nth-child(3) {
  width: 61px;
}
th:last-child {
  width: 27px;
  border: 0;
}
tbody {
  background: #373737;
}
td {
  height: 24px;
  padding: 0 4px;
}
td span {
  display: flex;
  align-items: center;
  gap: 3px;
}
td .step {
  flex: none;
}
td input[type="text"] {
  background: #393939;
}
.del svg {
  width: 18px;
  height: 18px;
}

/* document */
.document {
  position: relative;
  min-width: 0;
  display: grid;
  grid-template: 22px 20px 1fr / 21px 1fr;
  background: #383838;
}
.doc-tabs {
  grid-column: span 2;
  display: flex;
  padding-right: 22px;
  background: #282828;
  border-top: 1px solid #242424;
}
.doc-tabs button {
  flex: 1;
  color: #9a9a9a;
  font-size: 10px;
}
.doc-tabs .on {
  background: #333;
  color: #ccc;
}
.unit {
  padding: 3px 0 0 4px;
  font-size: 10px;
  color: #bbb;
}
.ruler-h, .ruler-v {
  display: block;
  width: 100%;
  height: 100%;
  min-height: 0;
  overflow: hidden;
}
.document text {
  font: 10px Roboto, sans-serif;
  fill: #bdbdbd;
  text-anchor: middle;
}
.canvas {
  position: relative;
  overflow: hidden;
  background: #222;
}
.sheet {
  display: block;
  width: 100%;
  height: 100%;
}
.cursor {
  position: absolute;
  left: 402px;
  top: 120px;
  width: 12px;
  height: 18px;
}

/* guides dialog */
.dialog {
  position: absolute;
  top: 279px;
  left: 50%;
  width: 717px;
  transform: translateX(-50%);
  background: #313131;
  border: 1px solid #5a5a5a;
  border-radius: 6px;
  box-shadow: 0 0 2px #000, 0 22px 40px 4px rgba(0, 0, 0, .6);
}
.dialog header {
  display: flex;
  align-items: center;
  height: 23px;
}
.dialog .lights {
  padding-left: 7px;
}
.dialog h2 {
  flex: 1;
  text-align: center;
  margin-right: 60px;
  font-size: 11px;
}
.dlg-body {
  display: flex;
  padding: 11px 19px 11px 18px;
}
.guides {
  padding-right: 11px;
  border-right: 1px solid #484848;
}
.lists {
  display: flex;
  gap: 8px;
}
.lists h4 {
  line-height: 30px;
  font-size: 11px;
}
.list {
  width: 160px;
  height: 215px;
  border: 1px solid #272727;
  background: repeating-linear-gradient(#303030 0 16px, #363636 16px 32px);
}
.list-bar {
  display: flex;
  gap: 7px;
  height: 21px;
  margin-top: 1px;
  padding: 2px 6px;
  color: #bbb;
  background: #2c2c2c;
}
.list-bar svg {
  width: 12px;
  height: 14px;
}
.dim, .list-bar .dim {
  color: #707070;
}
.guide-actions {
  display: flex;
  align-items: center;
  gap: 6px;
  margin-top: 14px;
}
.btn {
  height: 20px;
  padding: 0 8px;
  background: #383838;
  border: 1px solid #242424;
  border-bottom-color: #505050;
}
form {
  flex: 1;
  display: flex;
  flex-direction: column;
  padding-left: 11px;
}
form h4 {
  line-height: 20px;
  margin: 8px 0 2px;
  font-size: 11px;
}
form h4:first-child {
  line-height: 30px;
  margin: 0 0 2px;
}
form hr {
  width: 312px;
  height: 1px;
  margin: 15px 0 0 7px;
  border: 0;
  background: #484848;
}
.grid {
  display: grid;
  grid-template-columns: 71px 74px 69px 74px;
  gap: 5px;
  align-items: center;
}
.grid label {
  justify-self: end;
  padding-top: 2px;
  white-space: nowrap;
}
.grid .tight {
  font-family: Roboto, sans-serif;
  font-size: 11px;
}
.short {
  width: 43px;
}
.grid .combo, .grid input {
  background-color: #2e2e2e;
}
.farbe {
  width: 49px;
  height: 17px;
  background: #68e8d0;
}
.grid input.focus {
  border: 1px solid #4a7cb4;
  border-radius: 0;
}
.close {
  align-self: flex-end;
  width: 72px;
  margin-top: 21px;
}

/* right side */
.right {
  border-left: 2px solid #3a3a3a;
}
.transform {
  flex: none;
  height: 103px;
  display: flex;
  padding: 11px 0 0 17px;
  background: #404040;
}
.anchor {
  width: 38px;
  height: 38px;
  margin-top: 10px;
}
.xy {
  display: grid;
  grid-template-columns: 28px 60px 16px 60px;
  column-gap: 4px;
  grid-template-rows: 22px 22px 30px;
}
.xy label {
  text-align: right;
  line-height: 22px;
}
.xy input, .xy select {
  height: 18px;
  width: 60px;
}
.xy .gap {
  margin-top: 11px;
}
.link {
  width: 6px;
  height: 16px;
  margin: 12px 0 0 10px;
}
.pages {
  flex: none;
  height: 383px;
  background: #2e2e2e;
}
.masters {
  height: 114px;
}
.pages-head {
  display: flex;
  align-items: center;
  gap: 12px;
  height: 26px;
  padding-right: 5px;
}
.pages h3 {
  flex: 1;
  background: none;
}
.pages-head svg {
  width: 12px;
  height: 14px;
}
.pages-head .wide {
  margin-right: 8px;
}
.pages-head .wide svg {
  width: 15px;
}
.page-item {
  display: flex;
  align-items: center;
  gap: 8px;
  padding: 2px 0 0 7px;
  color: inherit;
  text-decoration: none;
}
.page-item i {
  width: 31px;
  height: 22px;
  background: #fff;
}
.page-item.on i {
  box-shadow: 0 0 0 4px #858585;
  border-radius: 1px;
}
.layer-opts {
  flex: none;
  display: flex;
  align-items: center;
  height: 30px;
  gap: 4px;
  padding: 0 4px 0 5px;
  background: #3e3e3e;
  border-bottom: 1px solid #2a2a2a;
}
.layer-opts label {
  font-size: 11px;
}
.layer-opts .combo {
  width: 46px;
  padding: 1px 2px 0;
  font-size: 11px;
}
.layer-opts .updown {
  flex: 1;
  padding-left: 3px;
}
.layer-opts .bare + .bare {
  margin-left: 3px;
}
.layers {
  flex: 1;
  min-height: 0;
  background: #2e2e2e;
}
.layer {
  display: flex;
  align-items: center;
  height: 33px;
  margin-right: 12px;
  padding: 0 7px 0 20px;
  color: #b8b8b8;
  background: linear-gradient(#8a4a30, #e0794f) no-repeat 0 0 / 2px 100% #373737;
  border-bottom: 1px solid #292929;
}
.layer i {
  width: 30px;
  height: 30px;
  border: 1px solid #000;
  background: #292929;
}
.layer label {
  flex: 1;
  padding-left: 6px;
}
.layer input:checked {
  background: #2c2c2c url("data:image/svg+xml,%3Csvg xmlns='http://www.w3.org/2000/svg' width='10' height='10'%3E%3Cpath d='M1 5l3 4 5-8' fill='none' stroke='%23fff' stroke-width='1.800'/%3E%3C/svg%3E") no-repeat center;
}
.layer-bar {
  flex: none;
  display: flex;
  align-items: center;
  gap: 11px;
  height: 22px;
  padding: 0 4px 0 4px;
  color: #bbb;
  background: #3e3e3e;
}
.layer-bar svg {
  width: 13px;
  height: 14px;
}
.layer-bar .stack {
  padding: 3px 2px;
  margin-right: 68px;
  background: #2c2c2c;
}
.layer-bar .stack svg {
  width: 17px;
}
.fx {
  font: italic 15px/18px "Liberation Serif", serif;
}

/* status bar */
.status {
  flex: none;
  height: 18px;
  display: flex;
  align-items: center;
  padding: 4px 0 0 9px;
  gap: 7px;
  background: #333;
}
.status svg {
  width: 12px;
  height: 12px;
}
.count {
  width: 90px;
  text-align: center;
}
.status p {
  margin-left: 7px;
  color: #ccc;
}
.status b {
  color: #fff;
}
```

FILE: document.js
```js
const SCALE = 3.768;          // pixels per mm at 88.2 %
const ORIGIN = { x: 90, y: 46 };
const page = { w: 297, h: 210, bleed: 3 };
const margin = { left: 20, right: 20, top: 15, bottom: 10 };
const columns = 12;
const grays = [
  '#000000', '#0c0b0a', '#171514', '#232020', '#302e2d', '#3c3937', '#4a4848', '#575656', '#636363', '#716e6e', '#828282',
  '#8c8c8b', '#9b9b9a', '#a8a8a7', '#b5b5b4', '#c0c0bf', '#cccccb', '#dadada', '#e4e4e4', '#f1f1f1', '#ffffff'
];

const px = (mm, start) => Math.round(start + mm * SCALE);

function rect(x, y, w, h, attrs) {
  return `<rect x="${x}" y="${y}" width="${w}" height="${h}" ${attrs}/>`;
}

function drawRulers() {
  let h = '';
  for (let mm = -22; mm <= 322; mm += 2) {
    const x = px(mm, ORIGIN.x);
    const len = mm % 20 === 0 ? 8 : mm % 4 === 0 ? 4 : 2;
    h += rect(x, 20 - len, 1, len, 'fill="#d0d0d0"');
    if (mm % 20 === 0) h += `<text x="${x}" y="11">${mm}</text>`;
  }
  h += rect(476, 0, 1, 20, 'fill="#fff"');
  document.getElementById('rulerH').innerHTML = h;

  let v = '';
  for (let mm = -12; mm <= 224; mm += 2) {
    const y = px(mm, ORIGIN.y);
    const len = mm % 20 === 0 ? 6 : mm % 4 === 0 ? 4 : 2;
    v += rect(21 - len, y, len, 1, 'fill="#d0d0d0"');
    if (mm % 20 === 0) v += `<text transform="translate(12 ${y}) rotate(-90)">${mm}</text>`;
  }
  document.getElementById('rulerV').innerHTML = v;
}

function drawPage() {
  const x0 = px(0, ORIGIN.x), x1 = px(page.w, ORIGIN.x);
  const y0 = px(0, ORIGIN.y), y1 = px(page.h, ORIGIN.y);
  const b = Math.round(page.bleed * SCALE);
  const left = px(margin.left, ORIGIN.x) + 1, right = px(page.w - margin.right, ORIGIN.x);
  const top = px(margin.top, ORIGIN.y), bottom = px(page.h - margin.bottom, ORIGIN.y);
  let s = rect(x0 - b, y0 - b, x1 - x0 + 2 * b, y1 - y0 + 2 * b, 'fill="none" stroke="#555"');
  s += rect(x0, y0, x1 - x0, y1 - y0, 'fill="#fff"');
  for (let i = 1; i < columns; i++) {
    const x = Math.round(left + (right - left) * i / columns);
    s += rect(x, top, 1, bottom - top, 'fill="#6fd8c4"');
  }
  s += rect(left, top, right - left, bottom - top, 'fill="none" stroke="#4a6aa8"');
  const sheet = document.getElementById('sheet');
  sheet.setAttribute('shape-rendering', 'crispEdges');
  sheet.innerHTML = s;
}

function fillSwatches() {
  document.getElementById('swatches').innerHTML = grays
    .map(c => `<button style="background: ${c}" aria-label="${c}"></button>`)
    .join('');
}

drawRulers();
drawPage();
fillSwatches();
```
